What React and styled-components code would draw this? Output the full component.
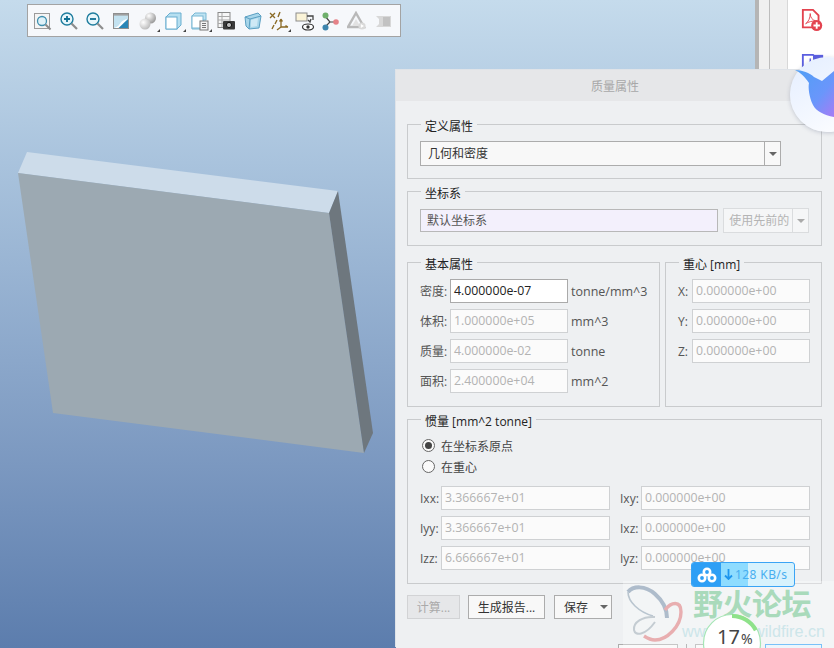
import styled, { createGlobalStyle } from "styled-components";

const GlobalStyle = createGlobalStyle`
    html, body { margin: 0; padding: 0; }
    body {
        font-family: "Open Sans", "Noto Sans CJK SC", sans-serif;
        font-size: 12px;
        color: #333;
    }
`;

const Screen = styled.div`
    position: relative;
    width: 834px;
    height: 648px;
    overflow: hidden;
    display: flex;
    background: #fff;
`;

const Canvas = styled.div`
    position: relative;
    width: 755px;
    height: 100%;
    padding: 4px 0 0 27px;
    box-sizing: border-box;
    background: linear-gradient(180deg, #c5dbec 0%, #a9c3dd 25%, #7b98c0 72%, #5c7dad 100%);
`;

const Plate = styled.svg`
    position: absolute;
    inset: 0;
`;

const Toolbar = styled.div`
    position: relative;
    display: inline-flex;
    align-items: center;
    height: 33px;
    padding: 0 3px 0 2px;
    box-sizing: border-box;
    background: #f6f8fb;
    border: 1px solid #a3a3a3;
`;

const ToolCell = styled.div`
    position: relative;
    width: 26.2px;
    height: 22px;
    display: flex;
    align-items: center;
    justify-content: center;

    &::after {
        content: ${(p) => (p.$more ? '""' : "none")};
        position: absolute;
        right: 1px;
        bottom: 0;
        border-left: 3px solid transparent;
        border-bottom: 3px solid #444;
    }
`;

const Rail = styled.div`
    width: ${(p) => p.$w}px;
    height: 100%;
    box-sizing: border-box;
    background: ${(p) => p.$bg};
    border-right: 1px solid ${(p) => p.$line || "transparent"};
`;

const SidePanel = styled.div`
    flex: 1;
    display: flex;
    flex-direction: column;
    align-items: center;
    gap: 21px;
    padding: 8px 0 0 4px;
    background: #fff;
`;

const Dialog = styled.div`
    position: absolute;
    left: 396px;
    top: 70px;
    width: 438px;
    height: 578px;
    display: flex;
    flex-direction: column;
    background: #eef0f2;
    box-shadow: -1px -1px 0 #dfe3e8;
`;

const DialogTitle = styled.div`
    height: 31px;
    flex: none;
    padding-top: 1px;
    box-sizing: border-box;
    display: flex;
    align-items: center;
    justify-content: center;
    background: #e6e7e9;
    color: #a8a8a8;
    font-size: 12px;
`;

const DialogBody = styled.div`
    display: flex;
    flex-direction: column;
    gap: 4px;
    padding: 15px 12px 0 11px;
`;

const Group = styled.fieldset`
    margin: 0;
    padding: ${(p) => p.$pad || "9px 12px 12px"};
    min-width: 0;
    box-sizing: border-box;
    border: 1px solid #c9cbcd;
    height: ${(p) => p.$h}px;
    width: ${(p) => (p.$w ? `${p.$w}px` : "auto")};

    legend {
        position: relative;
        margin-left: 1px;
        padding: 0 4px;
        font-size: 12px;
        line-height: 16px;
        color: #222;
        white-space: nowrap;
    }

    legend span {
        position: relative;
        top: 3px;
    }
`;

const GroupRow = styled.div`
    display: flex;
    gap: 5px;
    margin-top: 4px;
`;

const Select = styled.div`
    width: 361px;
    height: 25px;
    box-sizing: border-box;
    display: flex;
    background: #f8f8f8;
    border: 1px solid #acacac;
`;

const SelectText = styled.div`
    flex: 1;
    padding-left: 7px;
    line-height: 23px;
    color: #333;
`;

const Arrow = styled.div`
    width: 15px;
    display: flex;
    align-items: center;
    justify-content: center;
    border-left: 1px solid ${(p) => p.$line || "#acacac"};

    &::before {
        content: "";
        border-left: 4px solid transparent;
        border-right: 4px solid transparent;
        border-top: 4px solid ${(p) => p.$color || "#666"};
    }
`;

const CoordRow = styled.div`
    display: flex;
    gap: 5px;
    margin-top: 1px;
`;

const CoordInput = styled.div`
    width: 299px;
    height: 23px;
    box-sizing: border-box;
    padding-left: 6px;
    line-height: 21px;
    background: #f3f0fc;
    border: 1px solid #b8b8b8;
    color: #555;
`;

const PriorCombo = styled.div`
    width: 86px;
    height: 25px;
    margin-top: -1px;
    box-sizing: border-box;
    display: flex;
    background: #f5f6f7;
    border: 1px solid #dadcde;
`;

const PriorText = styled.div`
    flex: 1;
    padding-left: 5px;
    line-height: 23px;
    color: #b4b4b4;
`;

const FieldGrid = styled.div`
    display: grid;
    grid-template-columns: ${(p) => p.$cols};
    grid-auto-rows: 24px;
    row-gap: 6px;
    align-items: center;
    margin-top: ${(p) => p.$top || 0}px;
`;

const FieldLabel = styled.span`
    color: #555;
    white-space: nowrap;
`;

const Value = styled.div`
    height: 24px;
    box-sizing: border-box;
    padding-left: 3px;
    line-height: 22px;
    font-size: 12.3px;
    background: ${(p) => (p.$on ? "#fff" : "#fbfbfb")};
    border: 1px solid ${(p) => (p.$on ? "#aaa" : "#cfd1d3")};
    color: ${(p) => (p.$on ? "#222" : "#b3b3b3")};
    white-space: nowrap;
    overflow: hidden;
`;

const Unit = styled.span`
    padding-left: 3px;
    color: #555;
    font-size: 12.5px;
    white-space: nowrap;
`;

const RadioRow = styled.label`
    display: flex;
    align-items: center;
    gap: 6px;
    height: 21px;
    padding-left: 2px;
    color: #444;
`;

const Radio = styled.span`
    width: 13px;
    height: 13px;
    box-sizing: border-box;
    display: flex;
    align-items: center;
    justify-content: center;
    border: 1px solid #666;
    border-radius: 50%;
    background: #fafafa;

    &::before {
        content: "";
        width: 7px;
        height: 7px;
        border-radius: 50%;
        background: ${(p) => (p.$on ? "#444" : "transparent")};
    }
`;

const RightLabel = styled(FieldLabel)`
    padding-left: 10px;
`;

const ButtonRow = styled.div`
    display: flex;
    gap: 8px;
    margin-top: 7px;
`;

const Button = styled.div`
    width: ${(p) => p.$w}px;
    height: 24px;
    box-sizing: border-box;
    display: flex;
    align-items: center;
    justify-content: center;
    background: ${(p) => (p.$off ? "#e6e7e9" : "#f8f8f8")};
    border: 1px solid ${(p) => (p.$off ? "#d2d3d5" : "#acacac")};
    color: ${(p) => (p.$off ? "#aaa" : "#333")};
`;

const SaveButton = styled(Button)`
    justify-content: space-between;
    margin-left: 1px;
    padding: 0 3px 0 9px;
`;

const Caret = styled.span`
    border-left: 4px solid transparent;
    border-right: 4px solid transparent;
    border-top: 4px solid #666;
`;

const Divider = styled.div`
    height: 1px;
    margin-top: 16px;
    background: #c9cbcd;
`;

const FooterRow = styled.div`
    display: flex;
    padding: 9px 0 0 222px;
    align-items: flex-start;
`;

const FooterButton = styled.div`
    width: ${(p) => p.$w}px;
    height: 12px;
    margin-right: ${(p) => p.$gap}px;
    box-sizing: border-box;
    background: ${(p) => p.$bg || "#f8f8f8"};
    border: 1px solid ${(p) => p.$line || "#acacac"};
`;

const FooterTick = styled.div`
    width: 1px;
    height: 4px;
    margin: 0 8px;
    background: #999;
`;

const BirdBadge = styled.div`
    position: absolute;
    left: 790px;
    top: 57px;
    width: 75px;
    height: 75px;
    border-radius: 50%;
    overflow: hidden;
    background: linear-gradient(150deg, #e4eeff 0%, #f6f9ff 70%, #ffffff 100%);
    box-shadow: 0 1px 4px rgba(90, 100, 130, 0.3);
`;

const Bird = styled.svg`
    position: absolute;
    left: 790px;
    top: 57px;
`;

const Watermark = styled.div`
    position: absolute;
    left: 623px;
    top: 581px;
    width: 211px;
    height: 67px;
    background: rgba(255, 255, 255, 0.32);
`;

const WatermarkTitle = styled.div`
    position: absolute;
    left: 70px;
    top: 4px;
    font-family: "Noto Sans CJK SC", sans-serif;
    font-size: 30px;
    line-height: 34px;
    font-weight: 700;
    letter-spacing: -0.5px;
    color: #a9dabb;
    white-space: nowrap;
`;

const WatermarkUrl = styled.div`
    position: absolute;
    left: 59px;
    top: 41px;
    font-family: "Liberation Sans", sans-serif;
    font-size: 16.2px;
    line-height: 18px;
    color: #cde6ea;
    white-space: nowrap;
`;

const WatermarkLogo = styled.svg`
    position: absolute;
    left: 2px;
    top: 3px;
`;

const SpeedWidget = styled.div`
    position: absolute;
    left: 691px;
    top: 562px;
    width: 104px;
    height: 25px;
    box-sizing: border-box;
    display: flex;
    border: 1px solid #3aa4f5;
    border-radius: 3px;
    overflow: hidden;
    background: linear-gradient(90deg, #8edcff 0%, #8edcff 55%, #d7f2fd 55%, #d7f2fd 100%);
`;

const SpeedIcon = styled.div`
    width: 29px;
    flex: none;
    display: flex;
    align-items: center;
    justify-content: center;
    background: #2e9ff5;
`;

const SpeedText = styled.div`
    display: flex;
    align-items: center;
    gap: 2px;
    padding-left: 3px;
    font-family: "Noto Sans", sans-serif;
    font-size: 12px;
    letter-spacing: 0.4px;
    color: #47aef0;
`;

const ProgressRing = styled.div`
    position: absolute;
    left: 702px;
    top: 613px;
    width: 60px;
    height: 60px;
`;

const RingLabel = styled.div`
    position: absolute;
    left: 15px;
    top: 11px;
    font-family: "Noto Sans", sans-serif;
    font-size: 20px;
    line-height: 26px;
    color: #444;
    white-space: nowrap;

    span {
        font-size: 14px;
        margin-left: 1px;
    }
`;

const toolIcons = [
    { d: (
        <>
            <rect x="1.5" y="2.5" width="15" height="15" fill="#f4f4f4" stroke="#9a9a9a" />
            <circle cx="9" cy="10" r="4.5" fill="#dff1f8" stroke="#3f8fae" strokeWidth="1.3" />
            <path d="M12.5 13.5L17.5 18.5" stroke="#8a8a8a" strokeWidth="2" />
        </>
    ) },
    { d: (
        <>
            <circle cx="8" cy="8" r="6" fill="#e8f6fb" stroke="#1f7d9e" strokeWidth="1.4" />
            <path d="M5 8H11M8 5V11" stroke="#0f6f93" strokeWidth="1.8" />
            <path d="M12.5 12.5L18 18" stroke="#8d8d8d" strokeWidth="2.2" />
        </>
    ) },
    { d: (
        <>
            <circle cx="8" cy="8" r="6" fill="#e8f6fb" stroke="#1f7d9e" strokeWidth="1.4" />
            <path d="M5 8H11" stroke="#0f6f93" strokeWidth="1.8" />
            <path d="M12.5 12.5L18 18" stroke="#8d8d8d" strokeWidth="2.2" />
        </>
    ) },
    { d: (
        <>
            <rect x="1.5" y="2.5" width="15" height="15" fill="#c3e2f0" stroke="#8f8f8f" />
            <rect x="2" y="3" width="14" height="1.6" fill="#a0a0a0" />
            <path d="M2 17C6 16 7 14 8.5 12S12 8.5 16 8V17Z" fill="#fff" />
            <path d="M6.5 17L16 8V17Z" fill="#2a86b6" />
        </>
    ) },
    { more: true, d: (
        <>
            <defs>
                <radialGradient id="ballA" cx="0.35" cy="0.3" r="0.8">
                    <stop offset="0" stopColor="#ffffff" />
                    <stop offset="1" stopColor="#8e8e8e" />
                </radialGradient>
                <radialGradient id="ballB" cx="0.35" cy="0.35" r="0.8">
                    <stop offset="0" stopColor="#ffffff" />
                    <stop offset="1" stopColor="#b0b0b0" />
                </radialGradient>
            </defs>
            <circle cx="12.5" cy="7" r="5.5" fill="url(#ballA)" />
            <circle cx="7" cy="13" r="5.5" fill="url(#ballB)" />
        </>
    ) },
    { more: true, d: (
        <>
            <path d="M2 6L6 2H17V14L13 18H2Z" fill="#b6dff0" stroke="#68aed0" />
            <rect x="2" y="6" width="11" height="12" fill="#fff" stroke="#68aed0" />
        </>
    ) },
    { more: true, d: (
        <>
            <path d="M2 5L5 2H16V9H13V18H2Z" fill="#bfe3f2" stroke="#78b7d4" />
            <rect x="2" y="5" width="11" height="12" fill="#fff" stroke="#78b7d4" />
            <rect x="10" y="10" width="8" height="9" fill="#f2f2f2" stroke="#777" />
            <path d="M12 12.5H16M12 14.5H16M12 16.5H16" stroke="#777" />
        </>
    ) },
    { d: (
        <>
            <rect x="2" y="1.5" width="12" height="15" fill="#f7f7f7" stroke="#8a8a8a" />
            <path d="M2 5.5H14M2 9H14M2 12.5H9M6 2V16" stroke="#a9a9a9" />
            <rect x="7" y="10" width="12" height="8.5" rx="1" fill="#3a3a3a" />
            <circle cx="13" cy="14" r="2.6" fill="#bbb" stroke="#111" />
        </>
    ) },
    { d: (
        <>
            <path d="M2 6L15 2L18 5L16 17L6 18L3 15Z" fill="#a8d6ea" stroke="#5b9fc2" />
            <path d="M2 6L7 8L18 5M7 8L6 18" fill="none" stroke="#5b9fc2" />
            <path d="M8 9L15 7L14 15L8 16Z" fill="#cfe9f5" />
        </>
    ) },
    { more: true, d: (
        <>
            <path d="M1 2L6 7M6 2L1 7" stroke="#8a6a25" strokeWidth="1.3" />
            <path d="M9 6L11 1M6 13L8 9M3 18L5 14" stroke="#8a6a25" strokeWidth="1.4" />
            <path d="M12 8V16H19M12 8L10.5 10.5M12 8L13.5 10.5M19 16L16.5 14.5" fill="none" stroke="#8a6a25" strokeWidth="1.3" />
            <path d="M12 16L8 19" stroke="#8a6a25" strokeWidth="1.3" />
        </>
    ) },
    { d: (
        <>
            <rect x="1" y="2" width="11" height="8" fill="#fbf4d8" stroke="#8c8c8c" />
            <path d="M12 5H18V9M16 8L15 11L13 9" fill="none" stroke="#444" strokeWidth="1.3" />
            <ellipse cx="13" cy="16" rx="5.5" ry="3" fill="#fff" stroke="#333" strokeWidth="1.2" />
            <circle cx="13" cy="16" r="1.7" fill="#333" />
        </>
    ) },
    { d: (
        <>
            <path d="M4 5L9 11L4 16M9 11H15" fill="none" stroke="#444" strokeWidth="1.2" />
            <circle cx="4.5" cy="4.5" r="3" fill="#6fb06c" />
            <circle cx="4.5" cy="16.5" r="3" fill="#3d85ad" />
            <circle cx="15" cy="11" r="2.8" fill="#e58288" />
        </>
    ) },
    { d: (
        <>
            <path d="M9 2L17 16H1Z" fill="none" stroke="#b9b9b9" strokeWidth="2.4" />
            <path d="M9 8L13 15H5Z" fill="#e2e2e2" />
            <circle cx="15" cy="15" r="3.6" fill="#d9d9d9" />
            <path d="M13.8 13L17 15L13.8 17Z" fill="#fff" />
        </>
    ) },
    { d: (
        <>
            <path d="M2 5H17V16H2L5 13V8Z" fill="#d8d8d8" />
            <path d="M9 6H16V15H9Z" fill="#c2c2c2" />
        </>
    ) },
];

const inertia = [
    ["Ixx:", "3.366667e+01", "Ixy:", "0.000000e+00"],
    ["Iyy:", "3.366667e+01", "Ixz:", "0.000000e+00"],
    ["Izz:", "6.666667e+01", "Iyz:", "0.000000e+00"],
];

const basics = [
    ["密度:", "4.000000e-07", "tonne/mm^3", true],
    ["体积:", "1.000000e+05", "mm^3"],
    ["质量:", "4.000000e-02", "tonne"],
    ["面积:", "2.400000e+04", "mm^2"],
];

export default function App() {
    return (
        <Screen>
            <GlobalStyle />
            <Canvas>
                <Plate width="755" height="648" viewBox="0 0 755 648">
                    <polygon points="18,173 27,152 338,191 329,213" fill="#cddcea" />
                    <polygon points="18,173 329,213 364,453 53,413" fill="#9ca9b2" />
                    <polygon points="338,191 329,213 364,453 373,433" fill="#6e777e" />
                </Plate>
                <Toolbar>
                    {toolIcons.map((icon, i) => (
                        <ToolCell key={i} $more={icon.more}>
                            <svg width="20" height="20" viewBox="0 0 20 20">{icon.d}</svg>
                        </ToolCell>
                    ))}
                </Toolbar>
            </Canvas>
            <Rail $w={4} $bg="#b5b5b5" />
            <Rail $w={11} $bg="#f0f0f0" $line="#bdbdbd" />
            <Rail $w={18} $bg="#f0f0f0" $line="#d8d8d8" />
            <SidePanel>
                <svg width="24" height="24" viewBox="0 0 26 24">
                    <path d="M2 1H13L19 7V20H2Z" fill="#fff" stroke="#e3434f" strokeWidth="2" />
                    <path d="M5 16C8 14 10 10 10 5C10 9 12 12 16 13C12 13 8 14 5 16Z" fill="none" stroke="#e3434f" strokeWidth="1" />
                    <circle cx="17" cy="18" r="6" fill="#e3434f" />
                    <path d="M13.5 18H20.5M17 14.5V21.5" stroke="#fff" strokeWidth="2" />
                </svg>
                <svg width="24" height="24" viewBox="0 0 26 24">
                    <path d="M2 1H13L19 7V20H2Z" fill="#fff" stroke="#5b5fe0" strokeWidth="2" />
                    <path d="M5 16C8 14 10 10 10 5C10 9 12 12 16 13C12 13 8 14 5 16Z" fill="none" stroke="#5b5fe0" strokeWidth="1" />
                    <rect x="13" y="1" width="11" height="9" fill="#5b5fe0" />
                </svg>
            </SidePanel>

            <Dialog>
                <DialogTitle>质量属性</DialogTitle>
                <DialogBody>
                    <Group $h={63}>
                        <legend><span>定义属性</span></legend>
                        <Select>
                            <SelectText>几何和密度</SelectText>
                            <Arrow />
                        </Select>
                    </Group>
                    <Group $h={63}>
                        <legend><span>坐标系</span></legend>
                        <CoordRow>
                            <CoordInput>默认坐标系</CoordInput>
                            <PriorCombo>
                                <PriorText>使用先前的</PriorText>
                                <Arrow $line="#dadcde" $color="#aaa" />
                            </PriorCombo>
                        </CoordRow>
                    </Group>
                    <GroupRow>
                        <Group $h={153} $w={253}>
                            <legend><span>基本属性</span></legend>
                            <FieldGrid $cols="30px 118px auto">
                                {basics.map(([label, value, unit, on]) => (
                                    <FieldRow key={label} label={label} value={value} unit={unit} on={on} />
                                ))}
                            </FieldGrid>
                        </Group>
                        <Group $h={153} $w={157}>
                            <legend><span>重心 [mm]</span></legend>
                            <FieldGrid $cols="14px 118px">
                                {["X:", "Y:", "Z:"].map((axis) => (
                                    <FieldRow key={axis} label={axis} value="0.000000e+00" />
                                ))}
                            </FieldGrid>
                        </Group>
                    </GroupRow>
                    <Group $h={173} $pad="8px 12px 0">
                        <legend><span>惯量 [mm^2 tonne]</span></legend>
                        <RadioRow><Radio $on />在坐标系原点</RadioRow>
                        <RadioRow><Radio />在重心</RadioRow>
                        <FieldGrid $cols="21px 169px 31px 169px" $top={9}>
                            {inertia.map(([a, av, b, bv]) => (
                                <InertiaRow key={a} a={a} av={av} b={b} bv={bv} />
                            ))}
                        </FieldGrid>
                    </Group>
                    <ButtonRow>
                        <Button $w={53} $off>计算...</Button>
                        <Button $w={77}>生成报告...</Button>
                        <SaveButton $w={58}>保存<Caret /></SaveButton>
                    </ButtonRow>
                </DialogBody>
                <Divider />
                <FooterRow>
                    <FooterButton $w={60} $gap={0} />
                    <FooterTick />
                    <FooterButton $w={53} $gap={17} />
                    <FooterButton $w={57} $gap={0} $bg="#e3f2fd" $line="#3aa4f5" />
                </FooterRow>
            </Dialog>

            <BirdBadge />
            <Bird width="44" height="75" viewBox="0 0 44 75">
                <defs>
                    <linearGradient id="bird" x1="0" y1="0" x2="1" y2="1">
                        <stop offset="0" stopColor="#4f9ff5" />
                        <stop offset="0.6" stopColor="#6a96fb" />
                        <stop offset="1" stopColor="#a67cf5" />
                    </linearGradient>
                </defs>
                <path d="M5 13C12 13 20 16 24 20L32 24L44 14V60C34 58 26 54 23 48C19 40 18 30 19 26C15 20 10 15 5 13Z" fill="url(#bird)" />
            </Bird>

            <Watermark>
                <WatermarkLogo width="62" height="60" viewBox="0 0 62 60">
                    <path d="M3 8C8 2 20 1 30 10C38 17 42 26 42 34" fill="none" stroke="#aebccb" strokeWidth="4" />
                    <path d="M3 8C3 18 14 28 28 32" fill="none" stroke="#b9c5cf" strokeWidth="1.6" />
                    <path d="M30 33C18 32 8 38 9 46C10 52 20 52 30 38" fill="none" stroke="#c4ccd2" strokeWidth="2" />
                    <path d="M40 26C46 18 56 16 56 28C56 42 42 56 30 56C26 56 22 54 19 52" fill="none" stroke="#e8aeb0" strokeWidth="3.4" />
                </WatermarkLogo>
                <WatermarkTitle>野火论坛</WatermarkTitle>
                <WatermarkUrl>www.proewildfire.cn</WatermarkUrl>
            </Watermark>

            <SpeedWidget>
                <SpeedIcon>
                    <svg width="20" height="16" viewBox="0 0 20 16">
                        <g fill="none" stroke="#fff" strokeWidth="2.6">
                            <circle cx="10" cy="5" r="3.2" />
                            <circle cx="5" cy="11" r="3.2" />
                            <circle cx="15" cy="11" r="3.2" />
                        </g>
                    </svg>
                </SpeedIcon>
                <SpeedText>
                    <svg width="9" height="11" viewBox="0 0 9 11">
                        <path d="M4.5 0V10M1 6.5L4.5 10L8 6.5" fill="none" stroke="#1e96ee" strokeWidth="1.8" />
                    </svg>
                    128 KB/s
                </SpeedText>
            </SpeedWidget>

            <ProgressRing>
                <svg width="60" height="60" viewBox="0 0 60 60">
                    <circle cx="30" cy="30" r="28.5" fill="#fff" stroke="#a6e6b6" strokeWidth="1.2" />
                    <circle
                        cx="30"
                        cy="30"
                        r="27"
                        fill="none"
                        stroke="#8fe28a"
                        strokeWidth="4"
                        strokeDasharray="29 170"
                        transform="rotate(-90 30 30)"
                    />
                </svg>
                <RingLabel>17<span>%</span></RingLabel>
            </ProgressRing>
        </Screen>
    );
}

function FieldRow({ label, value, unit, on }) {
    return (
        <>
            <FieldLabel>{label}</FieldLabel>
            <Value $on={on}>{value}</Value>
            {unit && <Unit>{unit}</Unit>}
        </>
    );
}

function InertiaRow({ a, av, b, bv }) {
    return (
        <>
            <FieldLabel>{a}</FieldLabel>
            <Value>{av}</Value>
            <RightLabel>{b}</RightLabel>
            <Value>{bv}</Value>
        </>
    );
}
